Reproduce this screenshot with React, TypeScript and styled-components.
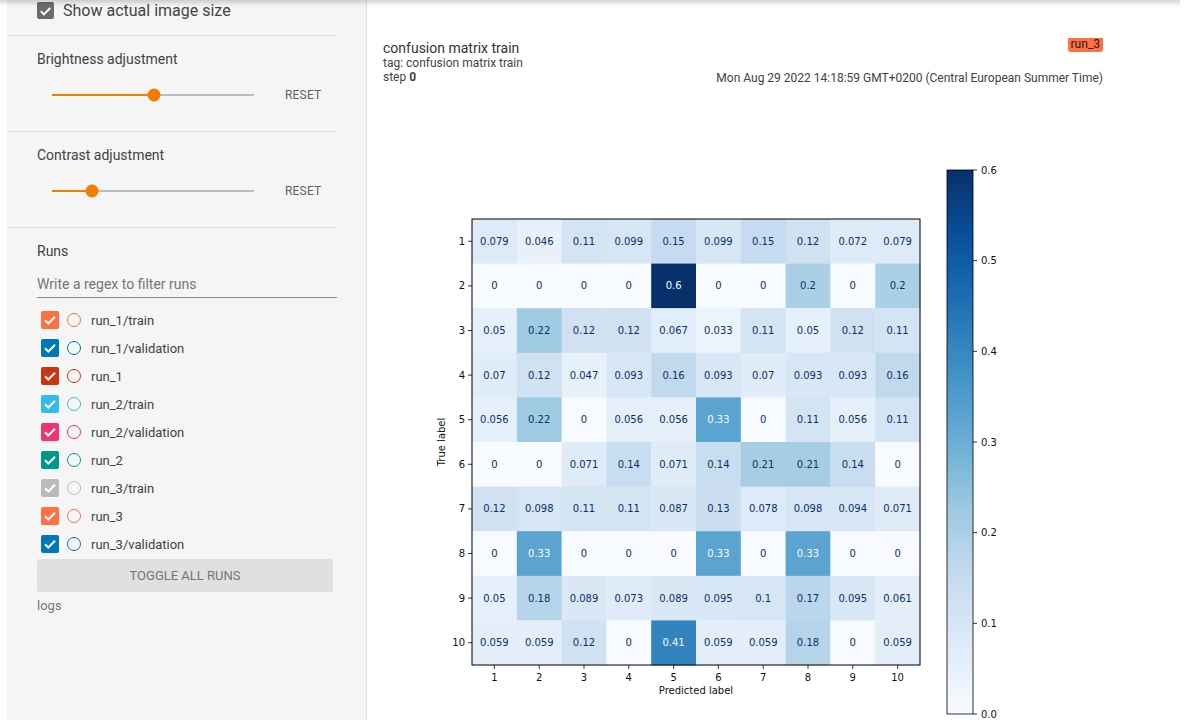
import styled, { createGlobalStyle } from 'styled-components';

const GlobalStyle = createGlobalStyle`
  html, body {
    margin: 0;
    padding: 0;
    height: 720px;
    overflow: hidden;
    background: #ffffff;
    font-family: Roboto, "Liberation Sans", Arial, sans-serif;
  }
`;

const runs = [
  { name: 'run_1/train', color: '#ff7043' },
  { name: 'run_1/validation', color: '#0077bb' },
  { name: 'run_1', color: '#cc3311' },
  { name: 'run_2/train', color: '#33bbee' },
  { name: 'run_2/validation', color: '#ee3377' },
  { name: 'run_2', color: '#009988' },
  { name: 'run_3/train', color: '#bbbbbb' },
  { name: 'run_3', color: '#ff7043' },
  { name: 'run_3/validation', color: '#0077bb' },
];

const matrix = [
  [0.079, 0.046, 0.11, 0.099, 0.15, 0.099, 0.15, 0.12, 0.072, 0.079],
  [0, 0, 0, 0, 0.6, 0, 0, 0.2, 0, 0.2],
  [0.05, 0.22, 0.12, 0.12, 0.067, 0.033, 0.11, 0.05, 0.12, 0.11],
  [0.07, 0.12, 0.047, 0.093, 0.16, 0.093, 0.07, 0.093, 0.093, 0.16],
  [0.056, 0.22, 0, 0.056, 0.056, 0.33, 0, 0.11, 0.056, 0.11],
  [0, 0, 0.071, 0.14, 0.071, 0.14, 0.21, 0.21, 0.14, 0],
  [0.12, 0.098, 0.11, 0.11, 0.087, 0.13, 0.078, 0.098, 0.094, 0.071],
  [0, 0.33, 0, 0, 0, 0.33, 0, 0.33, 0, 0],
  [0.05, 0.18, 0.089, 0.073, 0.089, 0.095, 0.1, 0.17, 0.095, 0.061],
  [0.059, 0.059, 0.12, 0, 0.41, 0.059, 0.059, 0.18, 0, 0.059],
];

// matplotlib "Blues"
const blues = ['#f7fbff', '#deebf7', '#c6dbef', '#9ecae1', '#6baed6', '#4292c6', '#2171b5', '#08519c', '#08306b'];

const hex = (h: string) => [1, 3, 5].map((i) => parseInt(h.slice(i, i + 2), 16));

const bluesAt = (t: number) => {
  const v = Math.max(0, Math.min(1, t)) * (blues.length - 1);
  const i = Math.min(Math.floor(v), blues.length - 2);
  const f = v - i;
  const a = hex(blues[i]);
  const b = hex(blues[i + 1]);
  const c = a.map((x, k) => Math.round(x + (b[k] - x) * f));
  return `rgb(${c[0]},${c[1]},${c[2]})`;
};

const Check = () => (
  <svg width="18" height="18" viewBox="0 0 18 18">
    <path d="M4 9.2l3.3 3.3L14 5.8" fill="none" stroke="#fff" strokeWidth="2" />
  </svg>
);

const Slider = ({ value }: { value: number }) => (
  <Track>
    <TrackFill style={{ width: `${value * 100}%` }} />
    <Thumb style={{ left: `${value * 100}%` }} />
  </Track>
);

const ConfusionPlot = () => {
  const ax = 89;
  const ay = 59;
  const cw = 44.8;
  const ch = 44.6;
  const cbTop = 10;
  const cbH = 544;
  const labels = Array.from({ length: 10 }, (_, i) => i + 1);
  return (
    <Plot width="720" height="570" viewBox="0 0 720 570">
      <defs>
        <linearGradient id="cb" x1="0" y1="1" x2="0" y2="0">
          {blues.map((c, i) => (
            <stop key={c} offset={i / (blues.length - 1)} stopColor={c} />
          ))}
        </linearGradient>
      </defs>
      {matrix.map((row, r) =>
        row.map((v, c) => (
          <g key={`${r}-${c}`}>
            <rect x={ax + c * cw} y={ay + r * ch} width={cw + 0.4} height={ch + 0.4} fill={bluesAt(v / 0.6)} />
            <text
              x={ax + c * cw + cw / 2}
              y={ay + r * ch + ch / 2}
              textAnchor="middle"
              dominantBaseline="central"
              fontSize="10"
              fill={v >= 0.3 ? '#f7fbff' : '#08306b'}
            >
              {String(v)}
            </text>
          </g>
        ))
      )}
      <rect x={ax} y={ay} width={cw * 10} height={ch * 10} fill="none" stroke="#000" strokeWidth="1" />
      {labels.map((l, i) => (
        <g key={l}>
          <line x1={ax - 4} x2={ax} y1={ay + i * ch + ch / 2} y2={ay + i * ch + ch / 2} stroke="#000" strokeWidth="0.8" />
          <text x={ax - 7} y={ay + i * ch + ch / 2} textAnchor="end" dominantBaseline="central" fontSize="10" fill="#111">
            {l}
          </text>
          <line x1={ax + i * cw + cw / 2} x2={ax + i * cw + cw / 2} y1={ay + ch * 10} y2={ay + ch * 10 + 4} stroke="#000" strokeWidth="0.8" />
          <text x={ax + i * cw + cw / 2} y={ay + ch * 10 + 12} textAnchor="middle" dominantBaseline="central" fontSize="10" fill="#111">
            {l}
          </text>
        </g>
      ))}
      <text x={ax + cw * 5} y={530} textAnchor="middle" dominantBaseline="central" fontSize="10" fill="#111">
        Predicted label
      </text>
      <text
        x={58}
        y={282}
        textAnchor="middle"
        dominantBaseline="central"
        fontSize="10"
        fill="#111"
        transform="rotate(-90 58 282)"
      >
        True label
      </text>
      <rect x={564} y={cbTop} width={26} height={cbH} fill="url(#cb)" stroke="#000" strokeWidth="0.8" />
      {[0.6, 0.5, 0.4, 0.3, 0.2, 0.1, 0.0].map((t, i) => {
        const y = cbTop + (i * cbH) / 6;
        return (
          <g key={t}>
            <line x1={590} x2={594} y1={y} y2={y} stroke="#000" strokeWidth="0.8" />
            <text x={598} y={y} dominantBaseline="central" fontSize="10" fill="#111">
              {t.toFixed(1)}
            </text>
          </g>
        );
      })}
    </Plot>
  );
};

export default function App() {
  return (
    <>
      <GlobalStyle />
      <TopShadow />
      <Layout>
        <Sidebar>
          <TopRow>
            <ImageSizeBox>
              <Check />
            </ImageSizeBox>
            <BigLabel>Show actual image size</BigLabel>
          </TopRow>
          <Section>
            <SectionTitle>Brightness adjustment</SectionTitle>
            <SliderRow>
              <Slider value={0.505} />
              <ResetButton>Reset</ResetButton>
            </SliderRow>
          </Section>
          <Section>
            <SectionTitle>Contrast adjustment</SectionTitle>
            <SliderRow>
              <Slider value={0.2} />
              <ResetButton>Reset</ResetButton>
            </SliderRow>
          </Section>
          <RunsSection>
            <SectionTitle>Runs</SectionTitle>
            <FilterInput placeholder="Write a regex to filter runs" />
            <RunList>
              {runs.map((run) => (
                <RunRow key={run.name}>
                  <RunBox $color={run.color}>
                    <Check />
                  </RunBox>
                  <RunDot $color={run.color} />
                  <RunName>{run.name}</RunName>
                </RunRow>
              ))}
            </RunList>
            <ToggleButton>Toggle all runs</ToggleButton>
            <LogDir>logs</LogDir>
          </RunsSection>
        </Sidebar>
        <Main>
          <Card>
            <CardHeader>
              <HeaderLeft>
                <Title>confusion matrix train</Title>
                <Meta>tag: confusion matrix train</Meta>
                <Meta>
                  step <b>0</b>
                </Meta>
              </HeaderLeft>
              <HeaderRight>
                <RunBadge>run_3</RunBadge>
                <DateText>Mon Aug 29 2022 14:18:59 GMT+0200 (Central European Summer Time)</DateText>
              </HeaderRight>
            </CardHeader>
            <ConfusionPlot />
          </Card>
        </Main>
      </Layout>
    </>
  );
}

const TopShadow = styled.div`
  position: fixed;
  top: 0;
  left: 0;
  width: 1180px;
  height: 8px;
  background: linear-gradient(rgba(0, 0, 0, 0.16), rgba(0, 0, 0, 0.02) 70%, rgba(0, 0, 0, 0));
  z-index: 5;
`;

const Layout = styled.div`
  display: flex;
  width: 1180px;
  height: 720px;
  padding-left: 7px;
  box-sizing: border-box;
  background: #fff;
`;

const Sidebar = styled.div`
  width: 360px;
  flex-shrink: 0;
  box-sizing: border-box;
  padding-right: 30px;
  background: #f5f5f5;
  border-right: 1px solid #e3e3e3;
  color: #424242;
`;

const TopRow = styled.div`
  height: 36px;
  box-sizing: border-box;
  padding: 2px 0 0 30px;
  display: flex;
  align-items: flex-start;
  gap: 9px;
  border-bottom: 1px solid #e0e0e0;
`;

const ImageSizeBox = styled.div`
  width: 17px;
  height: 17px;
  border-radius: 2px;
  background: #6b6b6b;
  display: flex;
  align-items: center;
  justify-content: center;
`;

const BigLabel = styled.span`
  font-size: 16px;
  line-height: 18px;
  color: #444;
`;

const Section = styled.div`
  height: 96px;
  box-sizing: border-box;
  padding: 15px 0 0 30px;
  border-bottom: 1px solid #e0e0e0;
`;

const SectionTitle = styled.div`
  font-size: 14px;
  line-height: 16px;
  color: #424242;
`;

const SliderRow = styled.div`
  margin-top: 16px;
  height: 24px;
  display: flex;
  align-items: center;
  padding-left: 15px;
`;

const Track = styled.div`
  position: relative;
  width: 202px;
  height: 2px;
  background: #bdbdbd;
`;

const TrackFill = styled.div`
  height: 2px;
  background: #f57c00;
`;

const Thumb = styled.div`
  position: absolute;
  top: 50%;
  width: 13px;
  height: 13px;
  border-radius: 50%;
  background: #f57c00;
  transform: translate(-50%, -50%);
`;

const ResetButton = styled.div`
  margin-left: 31px;
  font-size: 12px;
  text-transform: uppercase;
  color: #616161;
  letter-spacing: 0.2px;
`;

const RunsSection = styled.div`
  padding: 15px 0 0 30px;
`;

const FilterInput = styled.input`
  display: block;
  margin-top: 12px;
  width: 300px;
  height: 27px;
  box-sizing: border-box;
  padding: 0;
  border: none;
  border-bottom: 1px solid #8a8a8a;
  background: transparent;
  font-family: Roboto, "Liberation Sans", Arial, sans-serif;
  font-size: 14px;
  outline: none;

  &::placeholder {
    color: #757575;
  }
`;

const RunList = styled.div`
  margin-top: 8px;
  display: flex;
  flex-direction: column;
`;

const RunRow = styled.div`
  height: 28px;
  display: flex;
  align-items: center;
  padding-left: 4px;
`;

const RunBox = styled.div<{ $color: string }>`
  width: 18px;
  height: 18px;
  border-radius: 2px;
  background: ${({ $color }) => $color};
  display: flex;
  align-items: center;
  justify-content: center;
`;

const RunDot = styled.div<{ $color: string }>`
  margin-left: 8px;
  width: 14px;
  height: 14px;
  box-sizing: border-box;
  border-radius: 50%;
  border: 1.5px solid ${({ $color }) => $color};
`;

const RunName = styled.span`
  margin-left: 10px;
  font-size: 13px;
  color: #424242;
`;

const ToggleButton = styled.div`
  margin-top: 1px;
  width: 296px;
  height: 33px;
  border-radius: 3px;
  background: #e0e0e0;
  display: flex;
  align-items: center;
  justify-content: center;
  font-size: 13px;
  text-transform: uppercase;
  color: #757575;
`;

const LogDir = styled.div`
  margin-top: 6px;
  font-size: 13px;
  line-height: 16px;
  color: #757575;
`;

const Main = styled.div`
  flex: 1;
  padding: 38px 0 0 16px;
  overflow: hidden;
`;

const Card = styled.div`
  width: 720px;
`;

const CardHeader = styled.div`
  display: flex;
  justify-content: space-between;
  align-items: flex-end;
`;

const HeaderLeft = styled.div`
  display: flex;
  flex-direction: column;
  margin-bottom: 1px;
  color: #212121;
`;

const Title = styled.div`
  font-size: 14px;
  line-height: 16px;
  margin-top: 2px;
  color: #333;
`;

const Meta = styled.div`
  font-size: 12px;
  line-height: 14px;
  color: #444;

  b {
    font-weight: 700;
  }
`;

const HeaderRight = styled.div`
  display: flex;
  flex-direction: column;
  align-items: flex-end;
  gap: 19px;
`;

const RunBadge = styled.div`
  padding: 0 3px;
  height: 14px;
  line-height: 13px;
  font-size: 12px;
  color: #222;
  background: #ff7043;
  border-radius: 0 0 3px 3px;
`;

const DateText = styled.div`
  font-size: 12px;
  line-height: 14px;
  color: #424242;
`;

const Plot = styled.svg`
  display: block;
  margin-top: 75px;
  font-family: "DejaVu Sans", sans-serif;
`;
